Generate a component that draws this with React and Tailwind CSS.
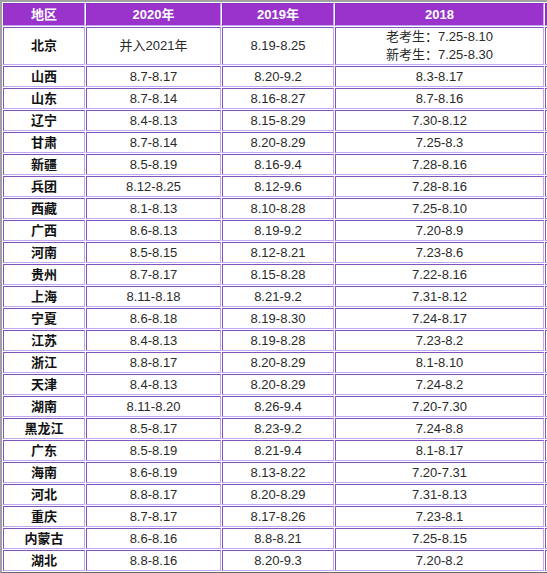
const rows = [
  ["山西", "8.7-8.17", "8.20-9.2", "8.3-8.17"],
  ["山东", "8.7-8.14", "8.16-8.27", "8.7-8.16"],
  ["辽宁", "8.4-8.13", "8.15-8.29", "7.30-8.12"],
  ["甘肃", "8.7-8.14", "8.20-8.29", "7.25-8.3"],
  ["新疆", "8.5-8.19", "8.16-9.4", "7.28-8.16"],
  ["兵团", "8.12-8.25", "8.12-9.6", "7.28-8.16"],
  ["西藏", "8.1-8.13", "8.10-8.28", "7.25-8.10"],
  ["广西", "8.6-8.13", "8.19-9.2", "7.20-8.9"],
  ["河南", "8.5-8.15", "8.12-8.21", "7.23-8.6"],
  ["贵州", "8.7-8.17", "8.15-8.28", "7.22-8.16"],
  ["上海", "8.11-8.18", "8.21-9.2", "7.31-8.12"],
  ["宁夏", "8.6-8.18", "8.19-8.30", "7.24-8.17"],
  ["江苏", "8.4-8.13", "8.19-8.28", "7.23-8.2"],
  ["浙江", "8.8-8.17", "8.20-8.29", "8.1-8.10"],
  ["天津", "8.4-8.13", "8.20-8.29", "7.24-8.2"],
  ["湖南", "8.11-8.20", "8.26-9.4", "7.20-7.30"],
  ["黑龙江", "8.5-8.17", "8.23-9.2", "7.24-8.8"],
  ["广东", "8.5-8.19", "8.21-9.4", "8.1-8.17"],
  ["海南", "8.6-8.19", "8.13-8.22", "7.20-7.31"],
  ["河北", "8.8-8.17", "8.20-8.29", "7.31-8.13"],
  ["重庆", "8.7-8.17", "8.17-8.26", "7.23-8.1"],
  ["内蒙古", "8.6-8.16", "8.8-8.21", "7.25-8.15"],
  ["湖北", "8.8-8.16", "8.20-9.3", "7.20-8.2"],
];

const cell =
  "p-0 text-center align-middle border border-t-[#7d55bd] border-l-[#7d55bd] border-b-[#c4a7ee] border-r-[#c4a7ee]";
const head =
  "p-0 text-center align-middle font-bold text-white bg-[#9933cc] leading-[21px] border border-t-[#8a2fc0] border-l-[#8a2fc0] border-b-[#c4a7ee] border-r-[#c4a7ee]";

export default function App() {
  return (
    <div
      className="w-[547px] h-[573px] overflow-hidden bg-white text-[13px]"
      style={{ fontFamily: '"Liberation Sans", Arial, "Noto Sans CJK SC", sans-serif' }}
    >
      <table className="table-fixed border-separate border-spacing-[1px] border-2 border-t-[#a0a0a0] border-l-[#a0a0a0] border-b-[#6a6a6a] border-r-[#6a6a6a] w-[660px]">
        <thead>
          <tr>
            <th className={`${head} w-[82px]`}>地区</th>
            <th className={`${head} w-[135px]`}>2020年</th>
            <th className={`${head} w-[112px]`}>2019年</th>
            <th className={`${head} w-[209px]`}>2018</th>
            <th className={head}></th>
          </tr>
        </thead>
        <tbody className="text-[#2a2a2a]">
          <tr>
            <td className={`${cell} font-bold text-[#111]`}>北京</td>
            <td className={cell}>并入2021年</td>
            <td className={cell}>8.19-8.25</td>
            <td className={`${cell} leading-[18px]`}>
              <div>老考生：7.25-8.10</div>
              <div>新考生：7.25-8.30</div>
            </td>
            <td className={cell}></td>
          </tr>
          {rows.map((r) => (
            <tr key={r[0]} className="leading-[19px]">
              <td className={`${cell} font-bold text-[#111]`}>{r[0]}</td>
              <td className={cell}>{r[1]}</td>
              <td className={cell}>{r[2]}</td>
              <td className={cell}>{r[3]}</td>
              <td className={cell}></td>
            </tr>
          ))}
        </tbody>
      </table>
    </div>
  );
}
